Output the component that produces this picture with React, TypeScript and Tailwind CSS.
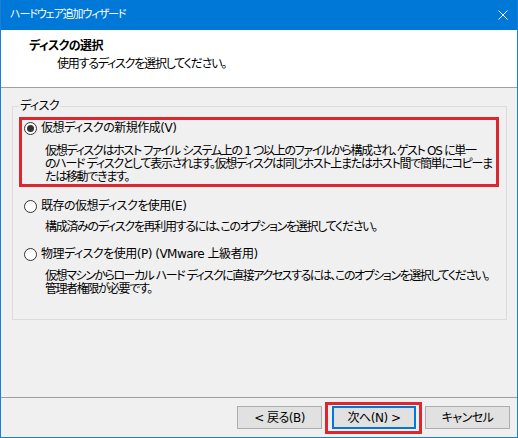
import type { ReactNode } from "react";

function Radio({ checked = false }: { checked?: boolean }) {
  return (
    <span className="flex h-[13px] w-[13px] shrink-0 items-center justify-center rounded-full border border-[#333333] bg-white">
      {checked && <span className="h-[7px] w-[7px] rounded-full bg-[#333333]" />}
    </span>
  );
}

function OptionLabel({ checked, children }: { checked?: boolean; children: ReactNode }) {
  return (
    <div className="flex h-[14px] items-center gap-[4px] leading-[14px]">
      <Radio checked={checked} />
      <span className="whitespace-nowrap tracking-[-0.5px]">{children}</span>
    </div>
  );
}

function Button({ children, primary = false }: { children: ReactNode; primary?: boolean }) {
  return (
    <button
      type="button"
      className={
        primary
          ? "h-[23px] w-[84px] border-2 border-[#0078d7] bg-[#e1e1e1] text-[12px] leading-[14px] tracking-[-0.5px] text-black"
          : "h-[23px] w-[85px] border border-[#adadad] bg-[#e1e1e1] text-[12px] leading-[14px] tracking-[-0.5px] text-black"
      }
    >
      {children}
    </button>
  );
}

export default function App() {
  return (
    <div className="flex h-[438px] w-[518px] flex-col bg-[#1a7fd6] px-[1px] pb-[1px] font-['DejaVu_Sans','Noto_Sans_CJK_JP',sans-serif] text-[12px] text-black [font-feature-settings:'palt']">
      {/* title bar */}
      <div className="flex h-[30px] shrink-0 items-center justify-between bg-[#0078d7] pl-[9px] pr-[9px] text-white">
        <span className="text-[11px] leading-[14px] tracking-[-1.1px]">ハードウェア追加ウィザード</span>
        <svg width="10" height="10" viewBox="0 0 10 10" className="block">
          <path d="M0.5 0.5 L9.5 9.5 M9.5 0.5 L0.5 9.5" stroke="white" strokeWidth="1" fill="none" />
        </svg>
      </div>

      {/* header */}
      <div className="h-[58px] shrink-0 border-b border-[#a0a0a0] bg-white pt-[9px]">
        <div className="pl-[28px] font-bold leading-[14px] tracking-[-0.6px]">ディスクの選択</div>
        <div className="mt-[4px] pl-[56px] leading-[14px] tracking-[-1.2px]">使用するディスクを選択してください。</div>
      </div>

      {/* body */}
      <div className="flex-1 bg-[#f0f0f0] pt-[11px]">
        <fieldset className="ml-[11px] mr-[10px] border border-[#dcdcdc] pb-[23px] pl-[6px] pr-[7px]">
          <legend className="px-[1px] leading-[14px] tracking-[-0.5px]">ディスク</legend>

          <div className="mt-[4px] h-[70px] border-[3px] border-[#dc2630] pl-[2px] pt-[1px]">
            <OptionLabel checked>仮想ディスクの新規作成(V)</OptionLabel>
            <p className="mt-[10px] whitespace-nowrap pl-[21px] leading-[13px] tracking-[-1.3px]">
              仮想ディスクはホスト ファイル システム上の 1 つ以上のファイルから構成され、ゲスト OS に単一
              <br />
              のハード ディスクとして表示されます。仮想ディスクは同じホスト上またはホスト間で簡単にコピーま
              <br />
              たは移動できます。
            </p>
          </div>

          <div className="mt-[12px] pl-[5px]">
            <OptionLabel>既存の仮想ディスクを使用(E)</OptionLabel>
            <p className="mt-[8px] whitespace-nowrap pl-[21px] leading-[13px] tracking-[-1.3px]">
              構成済みのディスクを再利用するには、このオプションを選択してください。
            </p>
          </div>

          <div className="mt-[13px] pl-[5px]">
            <OptionLabel>物理ディスクを使用(P) (VMware 上級者用)</OptionLabel>
            <p className="mt-[9px] whitespace-nowrap pl-[21px] leading-[13px] tracking-[-1.45px]">
              仮想マシンからローカル ハード ディスクに直接アクセスするには、このオプションを選択してください。
              <br />
              管理者権限が必要です。
            </p>
          </div>
        </fieldset>
      </div>

      {/* footer */}
      <div className="flex h-[40px] shrink-0 items-center justify-end gap-[3px] border-t border-[#a0a0a0] bg-[#f0f0f0] pr-[7px]">
        <Button>&lt; 戻る(B)</Button>
        <div className="flex h-[32px] items-center border-[3px] border-[#dc2630] pl-[4px] pr-[3px]">
          <Button primary>次へ(N) &gt;</Button>
        </div>
        <Button>キャンセル</Button>
      </div>
    </div>
  );
}
